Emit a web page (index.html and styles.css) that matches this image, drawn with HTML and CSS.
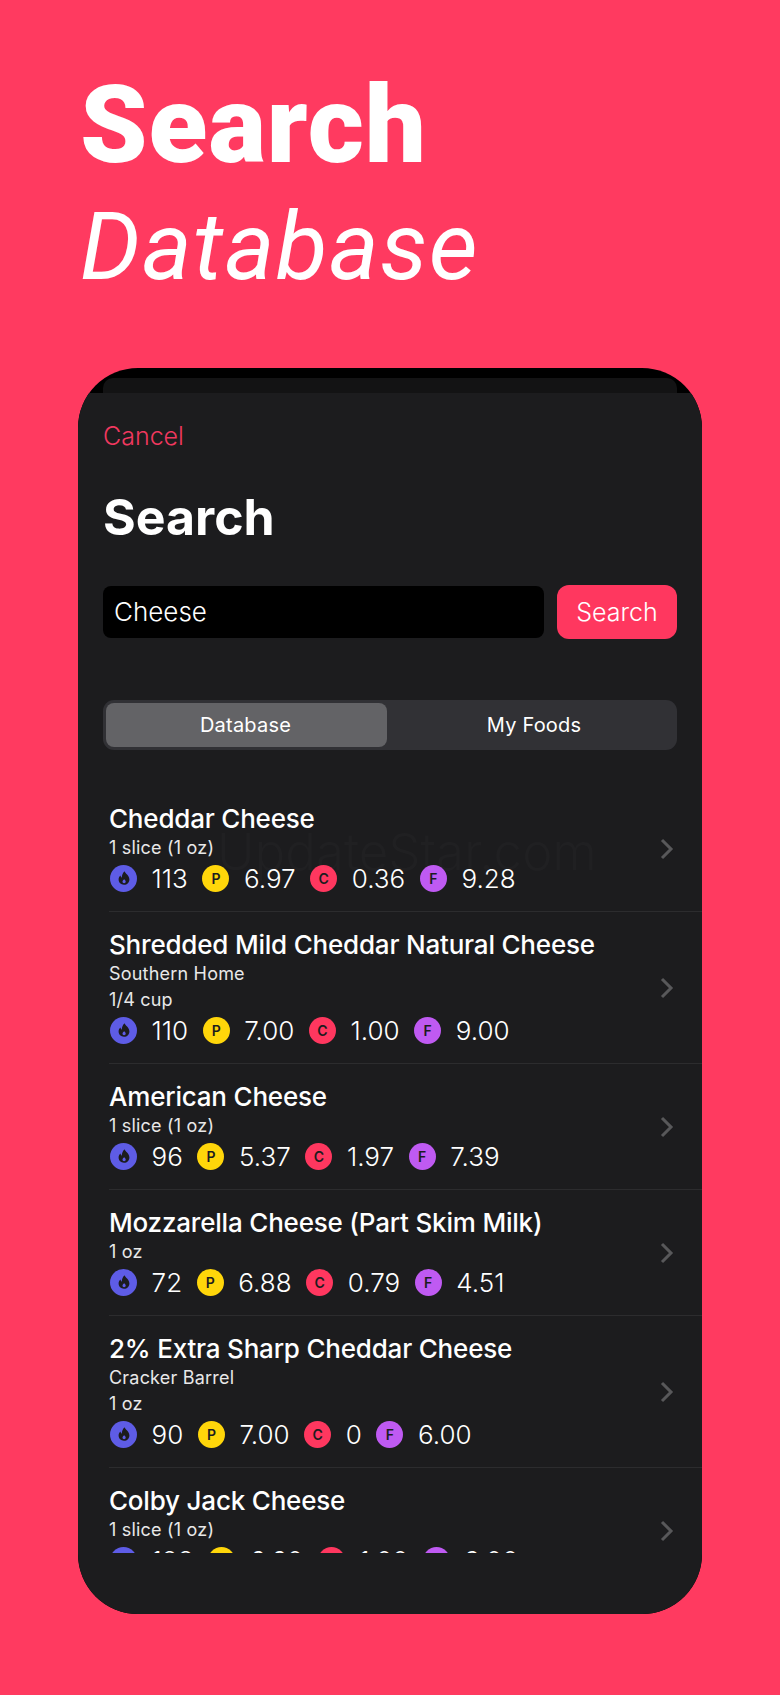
FILE: index.html
```html
<!DOCTYPE html>
<html lang="en">
<head>
  <meta charset="UTF-8" />
  <meta name="viewport" content="width=device-width, initial-scale=1" />
  <title>Search Database</title>
  <link rel="stylesheet" href="styles.css">
</head>
<body>
  <svg class="defs" width="0" height="0">
    <symbol id="flame" viewBox="0 0 16 16">
      <path fill-rule="evenodd" d="M8.600 1.200c.3 2.200 4.800 4 4.800 8.300 0 3-2.300 5.300-5.400 5.300S2.600 12.500 2.600 9.600c0-1.600.7-3 1.900-4 .1 1.100.6 1.800 1.300 2.100C5.700 5.200 6.800 2.800 8.600 1.200zM8.200 9.200c-.8.7-1.700 1.300-1.700 2.400 0 .9.700 1.600 1.600 1.600s1.600-.7 1.600-1.600c0-1.100-.9-1.600-1.500-2.400z"/>
    </symbol>
  </svg>

  <header class="promo">
    <h1>Search</h1>
    <h2>Database</h2>
  </header>

  <div class="phone">
    <div class="peek"></div>
    <main class="sheet">
      <a class="cancel">Cancel</a>
      <div class="title">Search</div>

      <div class="search-row">
        <div class="search-input">Cheese</div>
        <button class="search-btn">Search</button>
      </div>

      <div class="segment">
        <div class="seg-item active">Database</div>
        <div class="seg-item">My Foods</div>
      </div>

      <ul class="results">
        <li class="food">
          <div class="food-info">
            <div class="food-name">Cheddar Cheese</div>
            <div class="food-sub">1 slice (1 oz)</div>
            <div class="macros">
              <span class="dot cal"><svg><use href="#flame"/></svg></span><span>113</span>
              <span class="dot pro">P</span><span>6.97</span>
              <span class="dot carb">C</span><span>0.36</span>
              <span class="dot fat">F</span><span>9.28</span>
            </div>
          </div>
          <svg class="chevron" viewBox="0 0 14 22"><path d="M2 2l9 9-9 9"/></svg>
        </li>
        <li class="food">
          <div class="food-info">
            <div class="food-name">Shredded Mild Cheddar Natural Cheese</div>
            <div class="food-sub">Southern Home</div>
            <div class="food-sub">1/4 cup</div>
            <div class="macros">
              <span class="dot cal"><svg><use href="#flame"/></svg></span><span>110</span>
              <span class="dot pro">P</span><span>7.00</span>
              <span class="dot carb">C</span><span>1.00</span>
              <span class="dot fat">F</span><span>9.00</span>
            </div>
          </div>
          <svg class="chevron" viewBox="0 0 14 22"><path d="M2 2l9 9-9 9"/></svg>
        </li>
        <li class="food">
          <div class="food-info">
            <div class="food-name">American Cheese</div>
            <div class="food-sub">1 slice (1 oz)</div>
            <div class="macros">
              <span class="dot cal"><svg><use href="#flame"/></svg></span><span>96</span>
              <span class="dot pro">P</span><span>5.37</span>
              <span class="dot carb">C</span><span>1.97</span>
              <span class="dot fat">F</span><span>7.39</span>
            </div>
          </div>
          <svg class="chevron" viewBox="0 0 14 22"><path d="M2 2l9 9-9 9"/></svg>
        </li>
        <li class="food">
          <div class="food-info">
            <div class="food-name">Mozzarella Cheese (Part Skim Milk)</div>
            <div class="food-sub">1 oz</div>
            <div class="macros">
              <span class="dot cal"><svg><use href="#flame"/></svg></span><span>72</span>
              <span class="dot pro">P</span><span>6.88</span>
              <span class="dot carb">C</span><span>0.79</span>
              <span class="dot fat">F</span><span>4.51</span>
            </div>
          </div>
          <svg class="chevron" viewBox="0 0 14 22"><path d="M2 2l9 9-9 9"/></svg>
        </li>
        <li class="food">
          <div class="food-info">
            <div class="food-name">2% Extra Sharp Cheddar Cheese</div>
            <div class="food-sub">Cracker Barrel</div>
            <div class="food-sub">1 oz</div>
            <div class="macros">
              <span class="dot cal"><svg><use href="#flame"/></svg></span><span>90</span>
              <span class="dot pro">P</span><span>7.00</span>
              <span class="dot carb">C</span><span>0</span>
              <span class="dot fat">F</span><span>6.00</span>
            </div>
          </div>
          <svg class="chevron" viewBox="0 0 14 22"><path d="M2 2l9 9-9 9"/></svg>
        </li>
        <li class="food">
          <div class="food-info">
            <div class="food-name">Colby Jack Cheese</div>
            <div class="food-sub">1 slice (1 oz)</div>
            <div class="macros">
              <span class="dot cal"><svg><use href="#flame"/></svg></span><span>128</span>
              <span class="dot pro">P</span><span>6.60</span>
              <span class="dot carb">C</span><span>1.00</span>
              <span class="dot fat">F</span><span>9.00</span>
            </div>
          </div>
          <svg class="chevron" viewBox="0 0 14 22"><path d="M2 2l9 9-9 9"/></svg>
        </li>
      </ul>
    </main>
    <div class="watermark">UpdateStar.com</div>
  </div>
</body>
</html>
```

FILE: styles.css
```css
html, body {
  margin: 0;
  padding: 0;
}
body {
  width: 780px;
  height: 1695px;
  overflow: hidden;
  background: #ff3a60;
  color: #fff;
  font-family: Inter, "Liberation Sans", sans-serif;
}
.defs {
  display: block;
  height: 0;
}
.promo {
  height: 368px;
  padding: 64px 0 0 80px;
  box-sizing: border-box;
  font-family: Roboto, sans-serif;
}
.promo h1 {
  margin: 0;
  font-size: 108px;
  line-height: 122px;
  font-weight: 900;
  letter-spacing: 1px;
}
.promo h2 {
  margin: 5px 0 0;
  font-size: 95px;
  line-height: 112px;
  font-weight: 400;
  font-style: italic;
  letter-spacing: 1.2px;
}
.phone {
  position: relative;
  width: 624px;
  height: 1246px;
  margin-left: 78px;
  padding-top: 10px;
  box-sizing: border-box;
  background: #000;
  border-radius: 60px;
  overflow: hidden;
}
.peek {
  height: 15px;
  margin: 0 25px;
  background: #131314;
  border-radius: 10px 10px 0 0;
}
.sheet {
  height: 1221px;
  padding-top: 26px;
  box-sizing: border-box;
  background: #1c1c1e;
}
.cancel {
  display: block;
  margin-left: 25px;
  font-size: 25px;
  line-height: 34px;
  font-weight: 300;
  color: #f0385f;
}
.title {
  margin: 32px 0 0 25px;
  font-size: 50px;
  line-height: 64px;
  font-weight: 700;
}
.search-row {
  display: flex;
  align-items: center;
  gap: 13px;
  margin: 36px 25px 0;
}
.search-input {
  flex: 1;
  height: 52px;
  line-height: 52px;
  padding-left: 11px;
  background: #000;
  border-radius: 8px;
  font-size: 26px;
  font-weight: 300;
}
.search-btn {
  width: 120px;
  height: 54px;
  padding: 0;
  border: none;
  border-radius: 12px;
  background: #ff375f;
  color: #fff;
  font-family: inherit;
  font-size: 25px;
  font-weight: 300;
}
.segment {
  display: flex;
  height: 50px;
  margin: 61px 25px 0;
  padding: 3px;
  box-sizing: border-box;
  background: #313135;
  border-radius: 11px;
}
.seg-item {
  flex: 1;
  padding-left: 7px;
  text-align: center;
  font-size: 20px;
  line-height: 44px;
  font-weight: 400;
  letter-spacing: 0.2px;
}
.seg-item.active {
  flex: 0 0 281px;
  padding-left: 0;
  padding-right: 2px;
  box-sizing: border-box;
  background: #636366;
  border-radius: 8px;
}
.results {
  list-style: none;
  height: 767px;
  margin: 36px 0 0;
  padding: 0;
  overflow: hidden;
}
.food {
  display: flex;
  align-items: center;
  margin-left: 31px;
  padding: 17px 28px 16px 0;
  border-bottom: 1px solid #2c2c2e;
}
.food-info {
  flex: 1;
}
.food-name {
  font-size: 26px;
  line-height: 32px;
  font-weight: 500;
  letter-spacing: -0.2px;
}
.food-sub {
  font-size: 18px;
  line-height: 26px;
  font-weight: 400;
  letter-spacing: 0.2px;
  color: #e8e8e8;
}
.macros {
  display: flex;
  align-items: center;
  gap: 14.6px;
  height: 34px;
  margin-left: 1px;
  font-size: 26px;
  font-weight: 300;
}
.dot {
  display: flex;
  align-items: center;
  justify-content: center;
  width: 27px;
  height: 27px;
  border-radius: 50%;
  font-size: 14px;
  font-weight: 600;
  color: #1c1c1e;
}
.dot svg {
  width: 16px;
  height: 16px;
  fill: #1c1c1e;
}
.cal { background: #5e5ce6; }
.pro { background: #ffd60a; }
.carb { background: #ff375f; }
.fat { background: #bf5af2; }
.chevron {
  width: 14px;
  height: 22px;
  fill: none;
  stroke: #58585a;
  stroke-width: 3;
}
/* faint stamp sitting over the first row */
.watermark {
  position: absolute;
  top: 452px;
  left: 139px;
  font-size: 51px;
  line-height: 64px;
  font-weight: 300;
  color: rgba(255,255,255,0.018);
  pointer-events: none;
}
```
